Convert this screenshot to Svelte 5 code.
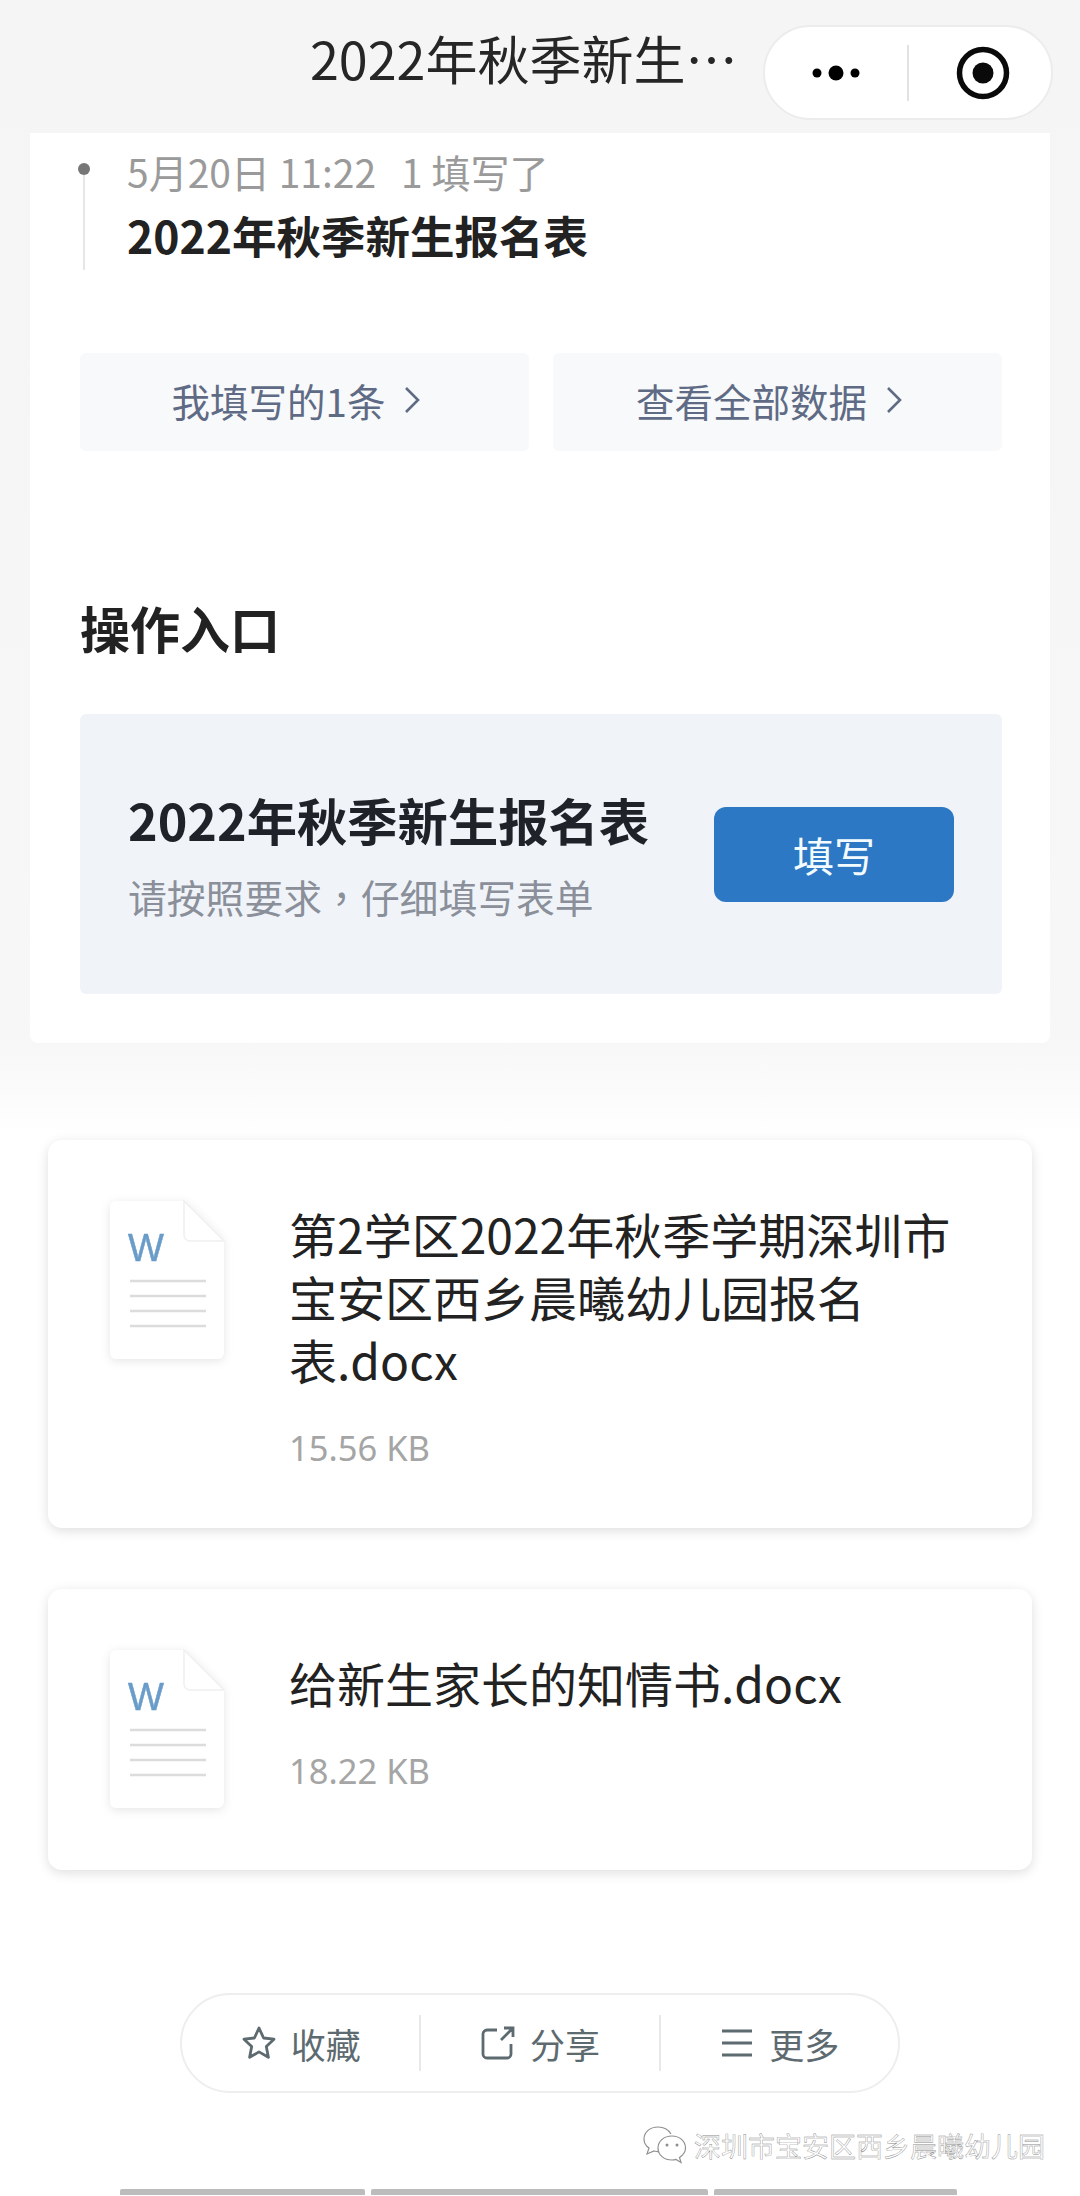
<script>
  const files = [
    { name: '第2学区2022年秋季学期深圳市\n宝安区西乡晨曦幼儿园报名\n表.docx', size: '15.56 KB' },
    { name: '给新生家长的知情书.docx', size: '18.22 KB' },
  ];
  const bars = [245, 337, 243];
</script>

<div class="page">
  <header class="nav">
    <div class="nav-title">2022年秋季新生…</div>
    <div class="capsule">
      <div class="cap-side more">
        <svg width="60" height="20" viewBox="0 0 60 20"><circle cx="11" cy="10" r="4.5" /><circle cx="30" cy="10" r="7.5" /><circle cx="49" cy="10" r="4.5" /></svg>
      </div>
      <div class="cap-line"></div>
      <div class="cap-side target">
        <svg width="56" height="56" viewBox="0 0 56 56"><circle cx="28" cy="28" r="23.5" fill="none" stroke="#0a0a0a" stroke-width="5.5" /><circle cx="28" cy="28" r="10.5" fill="#0a0a0a" /></svg>
      </div>
    </div>
  </header>

  <section class="main-card">
    <div class="timeline">
      <div class="rail"><span class="dot"></span><span class="rail-line"></span></div>
      <div>
        <div class="tl-time">5月20日 11:22<span class="tl-who">1 填写了</span></div>
        <div class="tl-title">2022年秋季新生报名表</div>
      </div>
    </div>

    <div class="links">
      {#each ['我填写的1条', '查看全部数据'] as label}
        <div class="link">
          {label}
          <svg width="18" height="30" viewBox="0 0 18 30"><path d="M3 3l12 12L3 27" fill="none" stroke="#5f6b85" stroke-width="2.6" /></svg>
        </div>
      {/each}
    </div>

    <h2 class="heading">操作入口</h2>

    <div class="entry">
      <div>
        <div class="entry-title">2022年秋季新生报名表</div>
        <div class="entry-sub">请按照要求，仔细填写表单</div>
      </div>
      <div class="fill-btn">填写</div>
    </div>
  </section>

  <section class="files">
    {#each files as file}
      <div class="file">
        <svg class="doc" width="120" height="166" viewBox="0 0 120 166">
          <path d="M8 3h68l40 40v112a6 6 0 0 1-6 6H8a6 6 0 0 1-6-6V9a6 6 0 0 1 6-6z" fill="#fff" />
          <path d="M76 3v34a6 6 0 0 0 6 6h34z" fill="#fff" stroke="#f0f0f0" stroke-width="1.5" />
          <text x="20" y="63" class="doc-w">W</text>
          <path d="M22 83h76M22 98h76M22 113h76M22 128h76" stroke="#dcdcdc" stroke-width="2.5" />
        </svg>
        <div class="file-text">
          <div class="file-name">{file.name}</div>
          <div class="file-size">{file.size}</div>
        </div>
      </div>
    {/each}
  </section>

  <div class="pill">
    <div class="pill-item">
      <svg width="36" height="36" viewBox="0 0 36 36"><path d="M18 3l4.600 10 10.400 1.200-7.700 7.200 2.100 10.900L18 26.900 8.600 32.300l2.100-10.900L3 14.200 13.400 13z" fill="none" stroke="#5d6a70" stroke-width="2.800" stroke-linejoin="round" /></svg>
      收藏
    </div>
    <div class="pill-item">
      <svg width="36" height="36" viewBox="0 0 36 36"><path d="M17 5H7a4 4 0 0 0-4 4v20a4 4 0 0 0 4 4h20a4 4 0 0 0 4-4V19M21 15L33 3M24 3h9v9" fill="none" stroke="#5d6a70" stroke-width="2.800" /></svg>
      分享
    </div>
    <div class="pill-item">
      <svg width="36" height="36" viewBox="0 0 36 36"><path d="M3 6h30M3 18h30M3 30h30" stroke="#5d6a70" stroke-width="3" /></svg>
      更多
    </div>
  </div>

  <div class="watermark">
    <svg width="44" height="40" viewBox="0 0 44 40">
      <path d="M28 8C25 3 20 1 15 1 7 1 1 6 1 13c0 4 2 7 5 9l-2 6 7-3c2 .6 3 .8 5 .8" fill="#fff" stroke="#8f8f8f" stroke-width="1.2" />
      <path d="M29 10c-8 0-14 5-14 12s6 12 14 12c1.500 0 3-.2 4-.6l5 3-1.500-5c3.500-2.200 6-5.400 6-9.400 0-7-6-12-13.500-12z" fill="#fff" stroke="#8f8f8f" stroke-width="1.2" />
      <circle cx="24" cy="19" r="1.500" fill="#8f8f8f" /><circle cx="34" cy="19" r="1.500" fill="#8f8f8f" />
    </svg>
    <span>深圳市宝安区西乡晨曦幼儿园</span>
  </div>

  <div class="bars">
    {#each bars as w}
      <div class="bar" style:width="{w}px"></div>
    {/each}
  </div>
</div>

<style>
  :global(body) {
    margin: 0;
  }
  .page {
    width: 1080px;
    height: 2196px;
    overflow: hidden;
    background: linear-gradient(#f5f5f5 0, #f7f7f7 1040px, #fff 1140px);
    font-family: "Noto Sans CJK SC", "Noto Sans", sans-serif;
    color: #222;
  }

  /* nav bar */
  .nav {
    height: 133px;
    display: flex;
    align-items: flex-start;
    padding-left: 310px;
    padding-right: 27px;
    box-sizing: border-box;
  }
  .nav-title {
    margin-top: 26px;
    font-size: 52px;
    line-height: 64px;
    white-space: nowrap;
    color: #262626;
  }
  .capsule {
    margin-left: auto;
    margin-top: 25px;
    width: 290px;
    height: 95px;
    box-sizing: border-box;
    background: #fff;
    border: 2px solid #ececec;
    border-radius: 48px;
    display: flex;
    align-items: center;
  }
  .cap-side {
    display: flex;
    justify-content: center;
    align-items: center;
  }
  .more {
    width: 142px;
  }
  .target {
    flex: 1;
    padding-left: 5px;
  }
  .cap-line {
    width: 2px;
    height: 56px;
    background: #e2e2e2;
  }

  /* main card */
  .main-card {
    margin: 0 30px;
    padding: 10px 48px 49px 50px;
    background: #fff;
    border-radius: 0 0 8px 8px;
  }
  .timeline {
    display: flex;
    margin-left: -1px;
    padding-bottom: 3px;
  }
  .rail {
    width: 10px;
    margin-right: 38px;
    display: flex;
    flex-direction: column;
    align-items: center;
    padding-top: 20px;
    margin-bottom: -3px;
  }
  .dot {
    width: 12px;
    height: 12px;
    border-radius: 50%;
    background: #777;
  }
  .rail-line {
    flex: 1;
    width: 2px;
    background: #e6e6e6;
  }
  .tl-time {
    font-size: 39px;
    line-height: 56px;
    color: #9a9a9a;
    margin-bottom: 4px;
  }
  .tl-who {
    margin-left: 25px;
  }
  .tl-title {
    font-size: 44.5px;
    line-height: 64px;
    font-weight: 700;
    color: #222;
  }
  .links {
    display: flex;
    gap: 24px;
    margin-top: 83px;
  }
  .link {
    flex: 1;
    height: 98px;
    box-sizing: border-box;
    padding: 0 16px 5px 0;
    display: flex;
    align-items: center;
    justify-content: center;
    gap: 18px;
    background: #f8f9fa;
    border-radius: 6px;
    font-size: 38.5px;
    color: #5f6b85;
  }
  .heading {
    margin: 144px 0 55px;
    font-size: 50px;
    line-height: 64px;
    font-weight: 700;
    color: #222;
  }
  .entry {
    height: 280px;
    box-sizing: border-box;
    padding: 0 48px;
    display: flex;
    align-items: center;
    justify-content: space-between;
    background: #f0f4f9;
    border-radius: 6px;
  }
  .entry-title {
    font-size: 50.3px;
    line-height: 70px;
    font-weight: 700;
    color: #1f2329;
  }
  .entry-sub {
    margin-top: 14px;
    font-family: "Noto Sans CJK TC", sans-serif;
    font-size: 38.8px;
    line-height: 56px;
    color: #8a8f99;
  }
  .fill-btn {
    width: 240px;
    height: 95px;
    display: flex;
    align-items: center;
    justify-content: center;
    background: #2d78c4;
    border-radius: 12px;
    color: #f2fbff;
    font-size: 41px;
  }

  /* attachments */
  .files {
    margin: 97px 48px 0;
    display: flex;
    flex-direction: column;
    gap: 61px;
  }
  .file {
    display: flex;
    gap: 61px;
    padding: 58px 40px 57px 60px;
    background: #fff;
    border-radius: 14px;
    box-shadow: 0 3px 12px rgba(0, 0, 0, 0.13);
  }
  .doc {
    flex: none;
    filter: drop-shadow(0 2px 5px rgba(0, 0, 0, 0.1));
  }
  .doc-w {
    font-family: "Liberation Sans", sans-serif;
    font-size: 38px;
    fill: #6a9cc9;
    stroke: #6a9cc9;
    stroke-width: 0.5px;
  }
  .file-text {
    flex: 1;
    padding-top: 4px;
  }
  .file-name {
    font-size: 48px;
    line-height: 63px;
    color: #222;
    white-space: pre-line;
  }
  .file-size {
    margin-top: 34px;
    font-size: 34.5px;
    line-height: 46px;
    color: #a5a5a5;
    font-family: "Noto Sans", sans-serif;
  }

  /* bottom actions */
  .pill {
    margin: 123px 0 0 180px;
    width: 720px;
    height: 100px;
    box-sizing: border-box;
    display: flex;
    align-items: center;
    background: #fff;
    border: 2px solid #eeeeee;
    border-radius: 50px;
  }
  .pill-item {
    flex: 1;
    height: 56px;
    display: flex;
    align-items: center;
    justify-content: center;
    gap: 14px;
    font-size: 35px;
    color: #5d6a70;
    border-left: 2px solid #e8e8e8;
  }
  .pill-item:first-child {
    border-left: none;
  }
  .watermark {
    margin-top: 33px;
    height: 40px;
    display: flex;
    align-items: center;
    justify-content: flex-end;
    gap: 7px;
    padding-right: 35px;
    font-size: 27px;
    line-height: 40px;
    color: #fff;
    -webkit-text-stroke: 0.4px #8a8a8a;
    white-space: nowrap;
  }
  .bars {
    margin: 23px 0 0 120px;
    display: flex;
    gap: 6px;
  }
  .bar {
    height: 6px;
    background: #bcbcbc;
    border-radius: 2px 2px 0 0;
  }
</style>
